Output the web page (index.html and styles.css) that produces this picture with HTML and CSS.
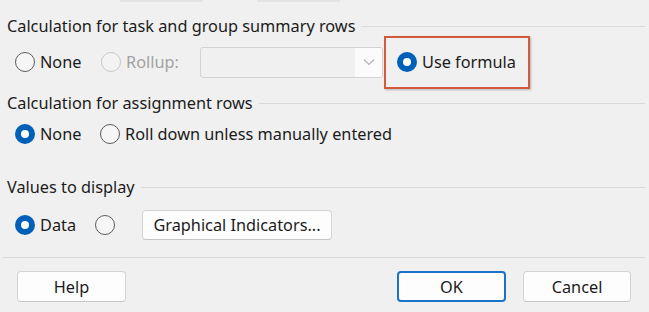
FILE: index.html
```html
<!DOCTYPE html>
<html lang="en">

<head>
    <meta charset="UTF-8">
    <title>Custom Fields</title>
    <link rel="stylesheet" href="styles.css">
</head>

<body>
    <div class="dialog">
        <div class="stubs">
            <span class="stub stub-a"></span>
            <span class="stub stub-b"></span>
        </div>

        <div class="heading h-first">
            <span class="heading-text">Calculation for task and group summary rows</span>
            <span class="heading-line"></span>
        </div>
        <div class="row row-summary">
            <label class="opt w-none"><span class="radio"></span>None</label>
            <label class="opt w-rollup disabled"><span class="radio"></span>Rollup:</label>
            <div class="combo">
                <span class="combo-field"></span>
                <span class="combo-arrow">
                    <svg width="12" height="8" viewBox="0 0 12 8">
                        <path d="M1 1.5 L6 6.5 L11 1.5" fill="none" stroke="#b4b4b4" stroke-width="1.2" />
                    </svg>
                </span>
            </div>
            <div class="highlight">
                <label class="opt"><span class="radio checked"></span>Use formula</label>
            </div>
        </div>

        <div class="heading h-second">
            <span class="heading-text">Calculation for assignment rows</span>
            <span class="heading-line"></span>
        </div>
        <div class="row row-assign">
            <label class="opt w-none2"><span class="radio checked"></span>None</label>
            <label class="opt"><span class="radio"></span>Roll down unless manually entered</label>
        </div>

        <div class="heading h-third">
            <span class="heading-text">Values to display</span>
            <span class="heading-line"></span>
        </div>
        <div class="row row-values">
            <label class="opt w-data"><span class="radio checked"></span>Data</label>
            <span class="radio"></span>
            <button class="btn btn-indicators">Graphical Indicators...</button>
        </div>

        <div class="separator"></div>

        <div class="footer">
            <button class="btn btn-foot">Help</button>
            <span class="spacer"></span>
            <button class="btn btn-foot btn-default">OK</button>
            <button class="btn btn-foot btn-cancel">Cancel</button>
        </div>
    </div>
</body>

</html>
```

FILE: styles.css
```css
* {
    margin: 0;
    padding: 0;
    box-sizing: border-box;
}

html,
body {
    width: 649px;
    height: 312px;
    overflow: hidden;
    background: #f0f0f0;
}

body {
    font-family: "Noto Sans", "Open Sans", sans-serif;
    font-size: 16.3px;
    color: #1b1b1b;
}

.dialog {
    display: flex;
    flex-direction: column;
}

.stubs {
    height: 16px;
    position: relative;
}

.stub {
    position: absolute;
    top: 0;
    height: 2px;
    background: #e4e4e4;
}

.stub-a {
    left: 120px;
    width: 83px;
}

.stub-b {
    left: 257px;
    width: 83px;
}

/* section headings with a rule */
.heading {
    display: flex;
    align-items: center;
    height: 20px;
    padding-left: 7px;
    padding-right: 4px;
}

.heading-line {
    flex: 1;
    height: 1px;
    background: #dadada;
    margin-left: 6px;
}

.h-second {
    margin-top: 5px;
}

.h-third {
    margin-top: 28px;
}

/* option rows */
.row {
    display: flex;
    align-items: center;
    padding-left: 15px;
}

.row-summary {
    height: 52px;
}

.row-assign {
    height: 30px;
    margin-top: 6px;
}

.row-values {
    height: 30px;
    margin-top: 13px;
}

.opt {
    display: inline-flex;
    align-items: center;
    gap: 5px;
    white-space: nowrap;
}

.w-none {
    width: 86px;
}

.w-rollup {
    width: 99px;
}

.w-none2 {
    width: 85px;
}

.w-data {
    width: 80px;
}

.disabled {
    color: #a2a2a2;
}

.radio {
    display: inline-block;
    width: 20px;
    height: 20px;
    border-radius: 50%;
    border: 1px solid #5c5c5c;
    background: #f6f6f6;
    flex: none;
    position: relative;
}

.disabled .radio {
    border-color: #c6c6c6;
    background: #f3f3f3;
}

.radio.checked {
    border: none;
    background: #005fb8;
}

.radio.checked::after {
    content: "";
    position: absolute;
    left: 6px;
    top: 6px;
    width: 8px;
    height: 8px;
    border-radius: 50%;
    background: #fff;
}

/* disabled dropdown */
.combo {
    display: flex;
    width: 183px;
    height: 31px;
    border: 1px solid #d2d2d2;
    border-radius: 3px;
    background: #f0f0f0;
    overflow: hidden;
}

.combo-field {
    flex: 1;
}

.combo-arrow {
    width: 27px;
    background: #fbfbfb;
    display: flex;
    align-items: center;
    justify-content: center;
}

.highlight {
    width: 146px;
    height: 53px;
    margin-left: 1px;
    border: 2px solid #d35b3b;
    box-shadow: 1px 1px 2px rgba(0, 0, 0, 0.25);
    display: flex;
    align-items: center;
    padding-left: 11px;
}

/* buttons */
.btn {
    font-family: inherit;
    font-size: 16.3px;
    color: #1b1b1b;
    background: #fdfdfd;
    border: 1px solid #d4d4d4;
    border-bottom-color: #c4c4c4;
    border-radius: 4px;
    height: 30px;
}

.btn-indicators {
    width: 190px;
    margin-left: 27px;
}

.separator {
    height: 1px;
    background: #dadada;
    margin: 17px 4px 0 2px;
}

.footer {
    display: flex;
    align-items: center;
    margin-top: 13px;
    padding: 0 18px 0 17px;
}

.btn-foot {
    width: 109px;
    height: 31px;
}

.spacer {
    flex: 1;
}

.btn-default {
    border: 2px solid #1a73c8;
}

.btn-cancel {
    width: 108px;
    margin-left: 17px;
}
```
